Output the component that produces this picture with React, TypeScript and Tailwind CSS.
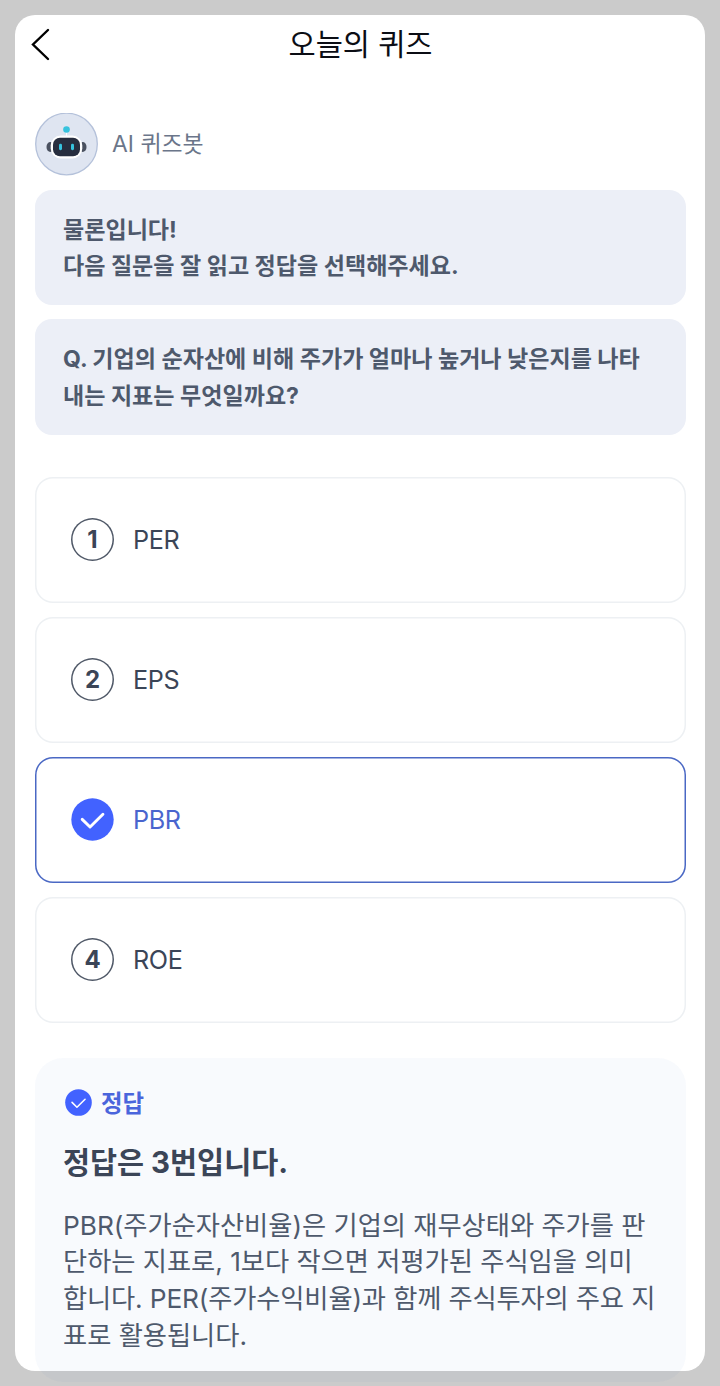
import React from 'react';
import clsx from 'clsx';

interface QuizOption {
  id: number;
  label: string;
}

const options: QuizOption[] = [
  { id: 1, label: 'PER' },
  { id: 2, label: 'EPS' },
  { id: 3, label: 'PBR' },
  { id: 4, label: 'ROE' },
];

const ANSWER_ID = 3;

function CheckCircle({ className, stroke = 1.9 }: { className?: string; stroke?: number }) {
  return (
    <svg viewBox="0 0 28 28" fill="none" className={className}>
      <circle cx="14" cy="14" r="13.8" fill="#4262FF" />
      <path
        d="M7.3 13.9L12.4 18.9L20.8 10.6"
        stroke="white"
        strokeWidth={stroke}
        strokeLinecap="round"
        strokeLinejoin="round"
      />
    </svg>
  );
}

function BotAvatar() {
  return (
    <svg viewBox="0 0 63 63" fill="none" className="size-[63px]">
      <circle cx="31.5" cy="31" r="30.8" fill="#DFE5F1" stroke="#B4C1DA" strokeWidth="1.3" />
      <path d="M31.5 17V23" stroke="white" strokeWidth="1" />
      <circle cx="31.5" cy="16.5" r="3.3" fill="#37C3DE" />
      <ellipse cx="15.3" cy="34" rx="3.8" ry="5" fill="#4A5160" />
      <ellipse cx="47.7" cy="34" rx="3.8" ry="5" fill="#4A5160" />
      <rect x="15.7" y="22.5" width="31.6" height="23" rx="10" fill="white" />
      <rect x="18" y="24.7" width="27" height="18.6" rx="7" fill="#272E3F" />
      <rect x="24" y="30.8" width="3" height="6.4" rx="1.4" fill="#37C3DE" />
      <rect x="36" y="30.8" width="3" height="6.4" rx="1.4" fill="#37C3DE" />
    </svg>
  );
}

function ChatBubble({ children }: { children: React.ReactNode }) {
  return (
    <div className="h-[115.5px] rounded-[17px] bg-[#ECEFF7] px-7 pt-[22px] text-[23.07px] leading-[36.8px] font-bold whitespace-nowrap text-[#4E596C]">
      {children}
    </div>
  );
}

function OptionCard({ option, selected }: { option: QuizOption; selected: boolean }) {
  return (
    <button
      className={clsx(
        'flex h-[126px] w-full items-center gap-[19px] rounded-[18px] pl-9 text-left ring-[1.5px] ring-inset',
        selected ? 'text-[#4A65CE] ring-[#4A68C4]' : 'text-[#3B4557] ring-[#EDF0F3]'
      )}
    >
      {selected ? (
        <CheckCircle className="size-[43px]" />
      ) : (
        <span className="flex size-[43px] items-center justify-center rounded-full pt-px text-[24px] font-bold ring-[1.5px] ring-[#4F5867] ring-inset">
          {option.id}
        </span>
      )}
      <span className="pt-0.5 text-[25.2px] tracking-[-0.4px]">{option.label}</span>
    </button>
  );
}

export default function App() {
  return (
    <div className="h-[1386px] w-[720px] overflow-hidden bg-[#CBCBCB] p-[15px] font-['Inter','Noto_Sans_CJK_KR',sans-serif]">
      <main className="h-[1356px] rounded-[20px] bg-white pr-[19px] pl-5">
        {/* Header */}
        <header className="relative flex h-[59px] items-center justify-center">
          <button className="absolute -left-1 top-[13px]" aria-label="뒤로">
            <svg viewBox="0 0 20 34" fill="none" className="h-[34px] w-5">
              <path d="M17 2L2 16.5L17 31" stroke="black" strokeWidth="2.4" strokeLinecap="round" />
            </svg>
          </button>
          <h1 className="text-[29.5px] text-[#0B0D14]">오늘의 퀴즈</h1>
        </header>

        {/* Chat */}
        <section className="pt-[38.5px]">
          <div className="mb-[14px] flex items-center gap-[14px]">
            <BotAvatar />
            <span className="pt-px text-[22.9px] text-[#6B768A]">AI 퀴즈봇</span>
          </div>
          <div className="flex flex-col gap-[14px]">
            <ChatBubble>
              물론입니다!
              <br />
              다음 질문을 잘 읽고 정답을 선택해주세요.
            </ChatBubble>
            <ChatBubble>
              Q. 기업의 순자산에 비해 주가가 얼마나 높거나 낮은지를 나타
              <br />
              내는 지표는 무엇일까요?
            </ChatBubble>
          </div>
        </section>

        {/* Options */}
        <section className="mt-[42px] flex flex-col gap-[14px]">
          {options.map((option) => (
            <OptionCard key={option.id} option={option} selected={option.id === ANSWER_ID} />
          ))}
        </section>

        {/* Answer */}
        <section className="mt-[35px] h-[324px] rounded-[28px] bg-[#3764C8]/[0.035] px-7 pt-[27px] whitespace-nowrap">
          <div className="flex h-9 items-center gap-[9px] pl-[2px] text-[#4A65DC]">
            <CheckCircle className="size-[27px]" stroke={1.6} />
            <span className="pt-0.5 text-[23.4px] font-bold">정답</span>
          </div>
          <h2 className="mt-[20.5px] text-[29.4px] leading-[44px] font-bold text-[#3B4557]">정답은 3번입니다.</h2>
          <p className="mt-[22.5px] text-[26.3px] leading-[36.7px] tracking-[-0.04px] text-[#4E596C]">
            PBR(주가순자산비율)은 기업의 재무상태와 주가를 판
            <br />
            단하는 지표로, 1보다 작으면 저평가된 주식임을 의미
            <br />
            <span className="tracking-[-0.16px]">합니다. PER(주가수익비율)과 함께 주식투자의 주요 지</span>
            <br />
            표로 활용됩니다.
          </p>
        </section>
      </main>
    </div>
  );
}
